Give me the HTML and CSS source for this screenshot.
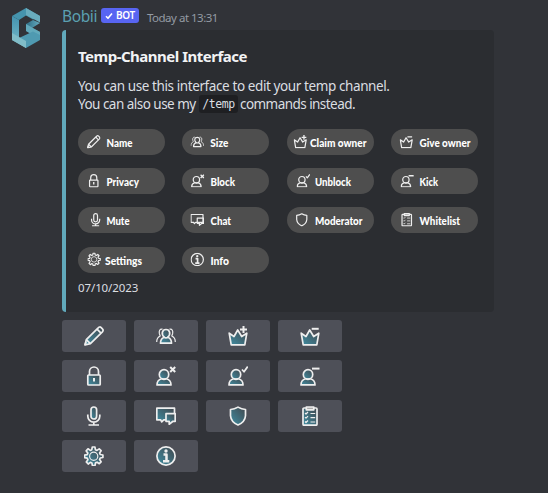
FILE: index.html
```html
<!DOCTYPE html>
<html lang="en">
<head>
<meta charset="utf-8">
<title>Temp-Channel Interface</title>
<link rel="stylesheet" href="styles.css">
</head>
<body>
<svg class="defs" aria-hidden="true">
  <defs>
    <linearGradient id="teal" x1="0" y1="1" x2="1" y2="0"><stop offset="0" stop-color="#3f8ea3"/><stop offset="1" stop-color="#41464c"/></linearGradient>
    <linearGradient id="logoA" x1="0" y1="0" x2="0" y2="1"><stop offset="0" stop-color="#4393b0"/><stop offset="1" stop-color="#7bbdca"/></linearGradient>
    <linearGradient id="logoB" x1="0" y1="0" x2="1" y2="0"><stop offset="0" stop-color="#2d6c84"/><stop offset="1" stop-color="#66acc0"/></linearGradient>
    <symbol id="pencil" viewBox="0 0 20 20"><path class="f" d="M1 19 2.3 13.7 14.2 1.8Q15.7.2 17.2 1.7L18.4 2.9Q19.8 4.3 18.4 5.8L6.4 17.7Z"/><path d="M2.3 13.7 6.4 17.7M13 3.2 17 7.2M1 19 2 16"/></symbol>
    <symbol id="group" viewBox="0 0 20 20"><path d="M6.5 3.2C3.7 2.8 2.8 5 3.4 7.7L4.2 10C2 11 .7 12.500.7 16M13.5 3.2c2.800-.4 3.700 1.800 3.100 4.500L15.800 10c2.200 1 3.500 2.500 3.500 6" class="n t"/><path class="f" d="M4.500 17.200c0-4 1.400-5.200 3.700-6C5 8.300 6 3.500 10 3.500s5 4.800 1.800 7.700c2.300.8 3.700 2 3.700 6Z"/><path d="M8 11.200q2 1.300 4 0"/></symbol>
    <symbol id="crown" viewBox="0 0 20 20"><path class="f" d="M3.200 18.800 1.200 7.200l4.800 3.300L9.700 4l4 6.500L18.800 7.200 16.800 18.800Z"/></symbol>
    <symbol id="claim" viewBox="0 0 20 20"><use href="#crown"/><path class="b" d="M15.500 0v7M12 3.500h7"/></symbol>
    <symbol id="give" viewBox="0 0 20 20"><use href="#crown"/><path class="b" d="M11.700 2.800h7"/></symbol>
    <symbol id="lock" viewBox="0 0 20 20"><path class="n" d="M5.500 9V5.500a4.500 4.500 0 0 1 9 0V9"/><rect class="f" x="3.800" y="9" width="12.400" height="10" rx=".8"/><path class="b" d="M10 12v3.500"/></symbol>
    <symbol id="person" viewBox="0 0 20 20"><circle class="f" cx="8" cy="8.400" r="4.700"/><path class="f" d="M1 18.900c0-3.800 1.600-5.300 4.600-6.100q2.400 1.200 4.800 0C13.400 13.600 15 15.100 15 18.900Z"/></symbol>
    <symbol id="block" viewBox="0 0 20 20"><use href="#person"/><path class="b" d="m14.200 1 5 5m0-5-5 5"/></symbol>
    <symbol id="unblock" viewBox="0 0 20 20"><use href="#person"/><path d="m14 3.500 2 2.300L19.700.6"/></symbol>
    <symbol id="kick" viewBox="0 0 20 20"><use href="#person"/><path class="b" d="M12 2.600h7.500"/></symbol>
    <symbol id="mic" viewBox="0 0 20 20"><rect class="f" x="7" y="1" width="5.600" height="12" rx="2.800"/><path class="n" d="M3.800 8.500v1.700a6 6 0 0 0 12 0V8.500M9.800 16.200V19M4.500 19h10.500"/></symbol>
    <symbol id="chat" viewBox="0 0 20 20"><path class="f" d="M.8 2.200h17.700v11.600H7.700l-2 2-1-2H.8Z"/><path class="f" d="M10 7.700h9.200v7.600H17l-3.800 2.900v-2.900H10Z"/></symbol>
    <symbol id="shield" viewBox="0 0 20 20"><path class="f" d="M10 1.100Q6.500 3.300 2.500 3.500v6.200Q3 16 10 19 17 16 17.500 9.700V3.500Q13.500 3.300 10 1.100Z"/></symbol>
    <symbol id="list" viewBox="0 0 20 20"><rect class="f" x="3" y="2" width="14" height="17.200" rx="1"/><path class="clip" d="M6.300 1h7.500v2.800H6.300Z"/><path class="t" d="m5 7 1 1 2-2M10.500 7.500h4.700M5 11.200l1 1 2-2m2.500 1.500h4.700M5 15.500l1 1 2-2m2.500 1.500h4.700"/></symbol>
    <symbol id="gear" viewBox="0 0 20 20"><path class="f" d="m8.300 1-.5 2.700-1.500.7L4 2.800 2.200 4.900l1.600 2.200-.6 1.600-2.600.4v2.500l2.600.5.7 1.600-1.600 2.200L4.200 18l2.200-1.600 1.500.6.5 2.500H11l.5-2.600 1.600-.7 2.200 1.500 1.800-1.900-1.500-2.200.6-1.600 2.700-.5V9l-2.700-.5-.6-1.600 1.500-2.200L15.200 2.900 13 4.400l-1.600-.7L10.900 1Z"/><circle class="t n" cx="9.700" cy="10.200" r="4.100"/></symbol>
    <symbol id="info" viewBox="0 0 20 20"><circle class="f" cx="10" cy="10" r="9.100"/><path class="i" d="M7.500 8.500h3v6.700M7 15.300h6.300"/><circle class="dot" cx="10" cy="5" r="1.700"/></symbol>
  </defs>
</svg>
<article class="message">
  <svg class="avatar" viewBox="0 0 28 40">
    <path fill="url(#logoA)" d="M0 8 7 12V30L14 34V40L0 32Z"/>
    <path fill="#4594ad" d="M0 8 14 0 28 8 21 11.500 14 7.500 7 12Z"/>
    <path fill="#69acbd" d="M14 0 28 8V14.500L14 7Z"/>
    <path fill="url(#logoB)" d="M14 16 21 12 28 15 20 20 28 24V31L14 23Z"/>
    <path fill="#62a9bb" d="M14 16 28 24V31L14 23Z"/>
    <path fill="#4f9ab1" d="M7 30 21 23.500 28 27V32L14 40Z"/>
    <path fill="#81bdc8" d="M0 32V25L14 33V40Z"/>
  </svg>
  <div class="content">
    <header class="head">
      <span class="name">Bobii</span>
      <span class="bot"><svg class="tick" viewBox="0 0 8 8"><path d="m1 4.300 2 2L7 1.500"/></svg>BOT</span>
      <time class="time">Today at 13:31</time>
    </header>
    <section class="embed">
      <h1 class="title">Temp-Channel Interface</h1>
      <p class="desc"><span class="line">You can use this interface to edit your temp channel.</span><span class="line"><span class="also">You can also use my</span><code>/temp</code><span class="cmd">commands instead.</span></span></p>
      <div class="pills">
        <div class="pill"><svg class="face"><use href="#pencil" x="9" y="6" width="13.500" height="13.500"/><text x="28.500" y="17.700" textLength="26">Name</text></svg></div>
        <div class="pill"><svg class="face"><use href="#group" x="8.500" y="6" width="13.500" height="13.500"/><text x="28.300" y="17.700" textLength="18">Size</text></svg></div>
        <div class="pill"><svg class="face"><use href="#claim" x="6.500" y="6" width="13.500" height="13.500"/><text x="23" y="17.700" textLength="56.500">Claim owner</text></svg></div>
        <div class="pill"><svg class="face"><use href="#give" x="8.500" y="6" width="13.500" height="13.500"/><text x="28.500" y="17.700" textLength="51">Give owner</text></svg></div>
        <div class="pill"><svg class="face"><use href="#lock" x="9" y="6" width="13.500" height="13.500"/><text x="28.500" y="17.700" textLength="32.500">Privacy</text></svg></div>
        <div class="pill"><svg class="face"><use href="#block" x="9" y="6" width="13.500" height="13.500"/><text x="28.500" y="17.700" textLength="24.500">Block</text></svg></div>
        <div class="pill"><svg class="face"><use href="#unblock" x="9.500" y="6" width="13.500" height="13.500"/><text x="28" y="17.700" textLength="36">Unblock</text></svg></div>
        <div class="pill"><svg class="face"><use href="#kick" x="9.500" y="6" width="13.500" height="13.500"/><text x="28.500" y="17.700" textLength="18.500">Kick</text></svg></div>
        <div class="pill"><svg class="face"><use href="#mic" x="11" y="6" width="13.500" height="13.500"/><text x="28.500" y="17.700" textLength="23">Mute</text></svg></div>
        <div class="pill"><svg class="face"><use href="#chat" x="8.500" y="6" width="13.500" height="13.500"/><text x="28.500" y="17.700" textLength="20.500">Chat</text></svg></div>
        <div class="pill"><svg class="face"><use href="#shield" x="8" y="6" width="13.500" height="13.500"/><text x="28" y="17.700" textLength="47.500">Moderator</text></svg></div>
        <div class="pill"><svg class="face"><use href="#list" x="9" y="6" width="13.500" height="13.500"/><text x="28.500" y="17.700" textLength="40.500">Whitelist</text></svg></div>
        <div class="pill"><svg class="face"><use href="#gear" x="9.500" y="5.500" width="13.500" height="13.500"/><text x="27" y="17.700" textLength="37">Settings</text></svg></div>
        <div class="pill"><svg class="face"><use href="#info" x="8.500" y="5.800" width="13.500" height="13.500"/><text x="28.500" y="17.700" textLength="18.500">Info</text></svg></div>
      </div>
      <footer class="date">07/10/2023</footer>
    </section>
    <div class="buttons">
      <button class="btn"><svg><use href="#pencil"/></svg></button>
      <button class="btn"><svg><use href="#group"/></svg></button>
      <button class="btn"><svg><use href="#claim"/></svg></button>
      <button class="btn"><svg><use href="#give"/></svg></button>
      <button class="btn"><svg><use href="#lock"/></svg></button>
      <button class="btn"><svg><use href="#block"/></svg></button>
      <button class="btn"><svg><use href="#unblock"/></svg></button>
      <button class="btn"><svg><use href="#kick"/></svg></button>
      <button class="btn"><svg><use href="#mic"/></svg></button>
      <button class="btn"><svg><use href="#chat"/></svg></button>
      <button class="btn"><svg><use href="#shield"/></svg></button>
      <button class="btn"><svg><use href="#list"/></svg></button>
      <button class="btn"><svg><use href="#gear"/></svg></button>
      <button class="btn"><svg><use href="#info"/></svg></button>
    </div>
  </div>
</article>
<script src="script.js"></script>
</body>
</html>
```
FILE: script.js
```js
// Condense glyphs as well as spacing in the pill labels.
document.querySelectorAll('.face text').forEach(function (label) {
  label.setAttribute('lengthAdjust', 'spacingAndGlyphs');
});
```
FILE: styles.css
```css
* { box-sizing: border-box; }
body { margin: 0; background: #313338; color: #dbdee1; font-family: "Noto Sans", sans-serif; overflow: hidden; }
.defs { display: block; width: 0; height: 0; }
.message { display: flex; gap: 22px; padding: 8px 0 0 12px; height: 493px; }
.avatar { width: 28px; height: 40px; flex: none; }
.content { width: 432px; }
.head { display: flex; height: 22px; align-items: flex-start; white-space: nowrap; }
.name { width: 35px; margin-right: 4px; font-size: 15.500px; line-height: 17px; letter-spacing: -.4px; color: #5ba0b1; }
.bot { width: 38px; height: 15px; padding-left: 4px; display: flex; align-items: center; gap: 3px; border-radius: 3px; background: #5865f2; color: #fff; font-size: 10px; font-weight: 600; letter-spacing: -.3px; line-height: 15px; }
.tick { width: 8px; height: 8px; fill: none; stroke: #fff; stroke-width: 1.600; }
.time { margin-left: 8px; font-size: 11.500px; line-height: 20px; letter-spacing: -.5px; color: #949ba4; }
.embed { height: 282px; padding: 16px 12px 0; border-left: 4px solid #61a9bb; border-radius: 4px; background: #2b2d31; }
.title { margin: 0; font-size: 15px; line-height: 20px; font-weight: 700; letter-spacing: -.5px; color: #f2f3f5; white-space: nowrap; }
.desc { margin: 11px 0 0; font-size: 13.500px; letter-spacing: -.4px; white-space: nowrap; }
.line { display: flex; align-items: center; height: 18px; }
.also { width: 121px; letter-spacing: -.52px; }
.cmd { letter-spacing: -.55px; }
code { width: 39px; height: 18px; margin-right: 2px; border-radius: 3px; background: #1e1f22; font: 11.500px/18px "DejaVu Sans Mono", monospace; letter-spacing: -.4px; text-align: center; }
.pills { display: grid; grid-template-columns: repeat(4, 87px); column-gap: 17.300px; grid-auto-rows: 26px; row-gap: 13.200px; margin-top: 16px; }
.pill { border-radius: 13px; background: #4e4e4e; }
.face { display: block; width: 87px; height: 26px; overflow: visible; --tint: none; --w: 1.800px; }
.face text { font: 900 12px Lato, sans-serif; fill: #fff; stroke: none; }
.date { margin-top: 7px; font-size: 11.500px; line-height: 16px; letter-spacing: -.1px; }
svg { stroke: #eee; stroke-width: var(--w); stroke-linejoin: round; fill: none; }
.avatar { stroke: none; }
.f { fill: var(--tint); }
.n { fill: none; }
.b { stroke-width: 2px; }
.i { stroke-width: 2.500px; }
.t { stroke-width: 1.200px; }
.clip { fill: #aaa; }
.dot { fill: #eee; stroke: none; }
.buttons { display: grid; grid-template-columns: repeat(4, 64px); grid-auto-rows: 32px; gap: 8px; margin-top: 8px; }
.btn { display: flex; align-items: center; justify-content: center; padding: 0; border: 0; border-radius: 3px; background: #4e5058; }
.btn svg { width: 20px; height: 20px; --tint: url(#teal); --w: 1.700px; }
```
